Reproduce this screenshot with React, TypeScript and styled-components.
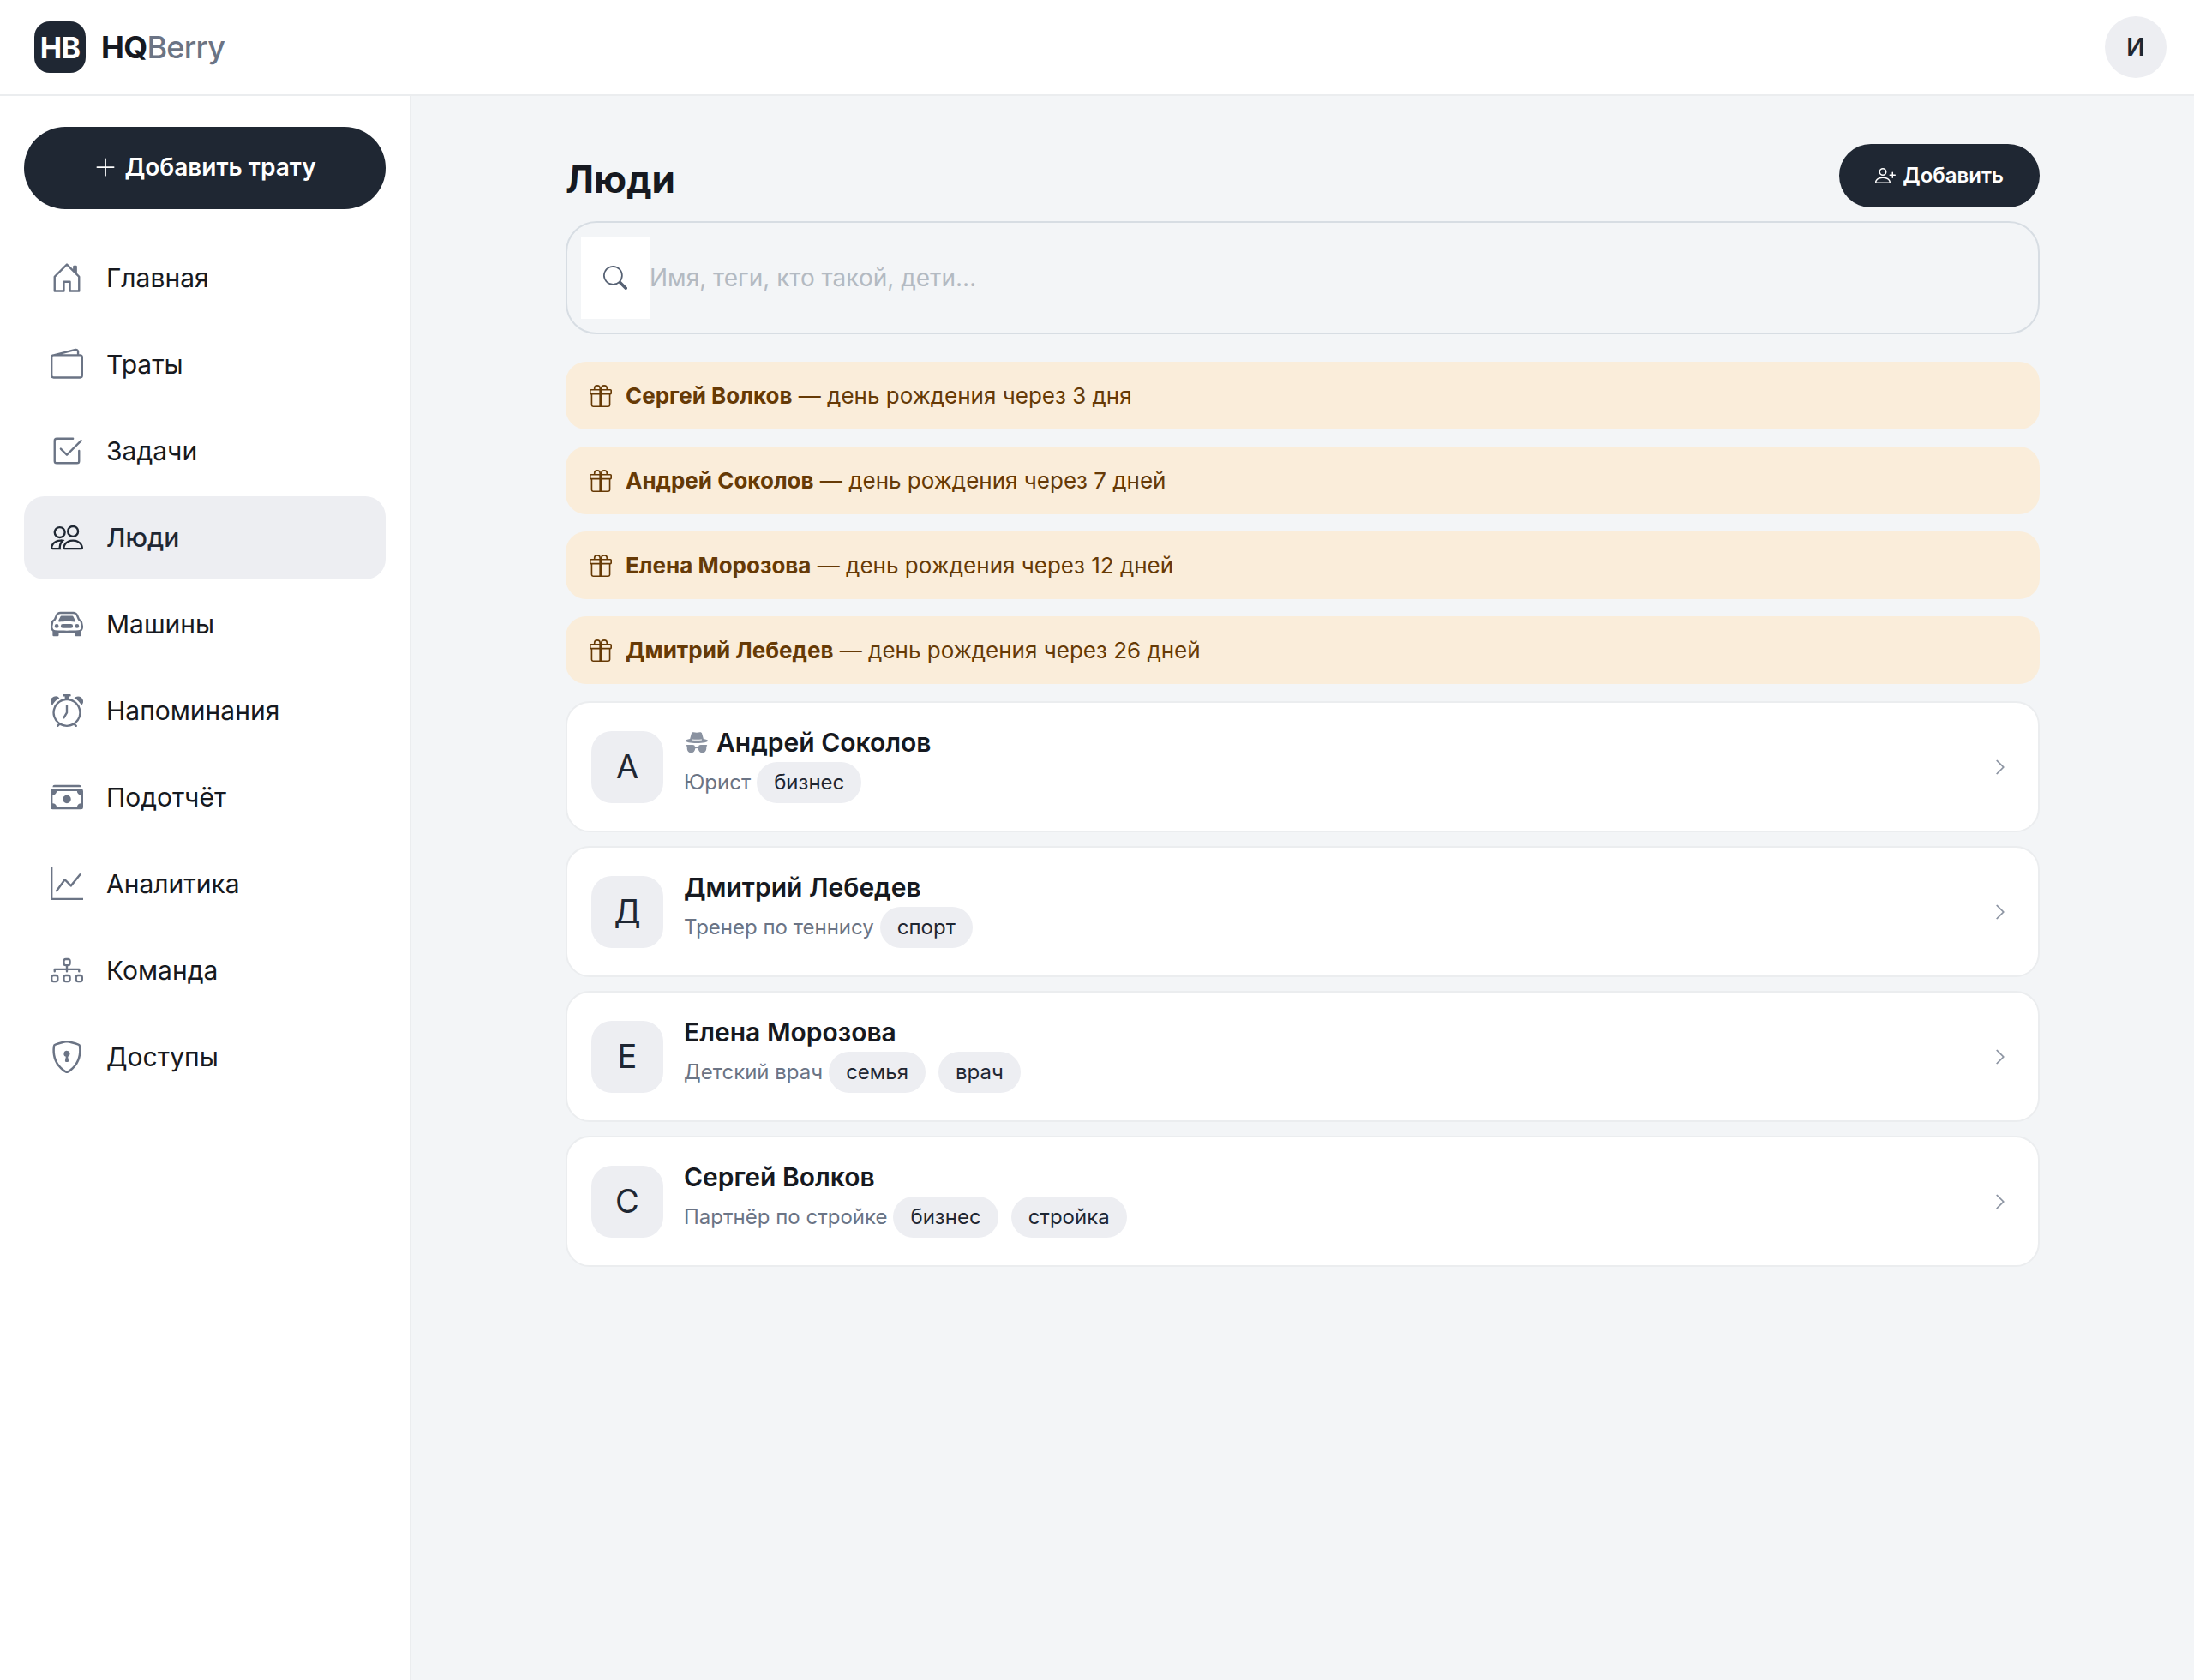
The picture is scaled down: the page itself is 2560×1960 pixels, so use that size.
import React from "react";
import styled, { createGlobalStyle } from "styled-components";
import type { IconType } from "react-icons";
import {
  BsPlusLg,
  BsHouseDoor,
  BsWallet2,
  BsCheck2Square,
  BsPeople,
  BsCarFront,
  BsAlarm,
  BsCashStack,
  BsGraphUp,
  BsDiagram3,
  BsShieldLock,
  BsPersonPlus,
  BsSearch,
  BsGift,
  BsChevronRight,
} from "react-icons/bs";

const color = {
  page: "#f3f5f7",
  surface: "#ffffff",
  soft: "#edeef2",
  line: "#ebedef",
  field: "#d7dde3",
  ink: "#161920",
  dark: "#1f2733",
  muted: "#6b7485",
  lens: "#566173",
  hint: "#b3bac2",
  faint: "#8a92a0",
  warm: "#faedda",
  warmInk: "#663a06",
};

const GlobalStyle = createGlobalStyle`
  *, *::before, *::after { box-sizing: border-box; }
  body {
    margin: 0;
    background: ${color.page};
    color: ${color.ink};
    font-family: Inter, "Noto Sans", sans-serif;
    font-size: 28px;
    line-height: 1.5;
  }
  button, input { font: inherit; }
  svg { display: block; flex: none; }
`;

const Shell = styled.div`
  min-height: 100vh;
  display: flex;
  flex-direction: column;
`;

const TopBar = styled.header`
  display: flex;
  align-items: center;
  justify-content: space-between;
  height: 112px;
  padding: 0 32px 0 40px;
  background: ${color.surface};
  border-bottom: 2px solid ${color.line};
`;

const Brand = styled.a`
  display: flex;
  align-items: center;
  gap: 18px;
  color: ${color.ink};
  font-size: 36px;
  font-weight: 700;
  letter-spacing: -0.02em;
  text-decoration: none;
`;

const BrandMark = styled.span`
  display: grid;
  place-items: center;
  width: 60px;
  height: 60px;
  border-radius: 18px;
  background: ${color.dark};
  color: #fff;
  font-size: 34px;
`;

const BrandTail = styled.span`
  color: ${color.muted};
  font-weight: 500;
`;

const UserButton = styled.button`
  width: 72px;
  height: 72px;
  padding: 0;
  border: 0;
  border-radius: 50%;
  background: ${color.soft};
  color: ${color.dark};
  font-size: 28px;
  font-weight: 600;
`;

const Body = styled.div`
  flex: 1;
  display: flex;
`;

const Sidebar = styled.aside`
  flex: none;
  display: flex;
  flex-direction: column;
  gap: 32px;
  width: 480px;
  padding: 36px 28px;
  background: ${color.surface};
  border-right: 2px solid ${color.line};
`;

const PillButton = styled.button<{ $size: "small" | "large" }>`
  display: flex;
  align-items: center;
  justify-content: center;
  gap: 8px;
  height: ${(p) => (p.$size === "large" ? 96 : 74)}px;
  padding: ${(p) => (p.$size === "large" ? "0 42px 2px" : "0 42px")};
  border: 0;
  border-radius: 48px;
  background: ${color.dark};
  color: #fff;
  font-size: ${(p) => (p.$size === "large" ? 28 : 24)}px;
  font-weight: 600;
`;

const Nav = styled.nav`
  display: flex;
  flex-direction: column;
  gap: 4px;
`;

const NavLink = styled.a<{ $active: boolean }>`
  display: flex;
  align-items: center;
  gap: 24px;
  height: 97px;
  padding: 0 28px;
  border-radius: 24px;
  background: ${(p) => (p.$active ? color.soft : "transparent")};
  color: ${(p) => (p.$active ? color.dark : color.ink)};
  font-size: 30px;
  font-weight: ${(p) => (p.$active ? 500 : 400)};
  text-decoration: none;
`;

const NavIcon = styled.span<{ $active: boolean }>`
  display: grid;
  place-items: center;
  width: 44px;
  padding-bottom: 1px;
  color: ${(p) => (p.$active ? color.dark : color.muted)};
`;

const Main = styled.main`
  flex: 1;
  min-width: 0;
  padding: 56px 40px;
`;

const Content = styled.div`
  max-width: 1720px;
  margin: 0 auto;
`;

const PageHead = styled.div`
  display: flex;
  align-items: flex-start;
  justify-content: space-between;
  margin-bottom: 16px;
`;

const Title = styled.h1`
  margin: 0;
  padding-top: 14px;
  font-size: 44px;
  line-height: 54px;
  font-weight: 700;
`;

const SearchBox = styled.label`
  display: flex;
  align-items: stretch;
  height: 132px;
  margin-bottom: 32px;
  padding: 16px;
  border: 2px solid ${color.field};
  border-radius: 36px;
`;

const SearchIcon = styled.span`
  display: grid;
  place-items: center;
  width: 80px;
  background: ${color.surface};
  color: ${color.lens};
`;

const SearchInput = styled.input`
  flex: 1;
  min-width: 0;
  padding: 0;
  border: 0;
  outline: 0;
  background: transparent;
  color: ${color.ink};
  font-size: 28px;
  &::placeholder {
    color: ${color.hint};
    opacity: 1;
  }
`;

const NoticeList = styled.div`
  display: flex;
  flex-direction: column;
  gap: 20px;
  margin-bottom: 20px;
`;

const Notice = styled.div`
  display: flex;
  align-items: center;
  gap: 16px;
  padding: 20px 28px;
  border-radius: 24px;
  background: ${color.warm};
  color: ${color.warmInk};
  font-size: 26px;
  line-height: 39px;
`;

const PeopleList = styled.div`
  display: flex;
  flex-direction: column;
  gap: 16px;
`;

const PersonCard = styled.a`
  display: flex;
  align-items: center;
  gap: 24px;
  padding: 24px 28px;
  border: 2px solid ${color.line};
  border-radius: 28px;
  background: ${color.surface};
  color: inherit;
  text-decoration: none;
`;

const Initial = styled.span`
  flex: none;
  display: grid;
  place-items: center;
  width: 84px;
  height: 84px;
  border-radius: 24px;
  background: ${color.soft};
  color: ${color.dark};
  font-size: 38px;
`;

const PersonText = styled.div`
  flex: 1;
  min-width: 0;
  padding-bottom: 8px;
`;

const PersonName = styled.div`
  display: flex;
  align-items: center;
  gap: 8px;
  font-size: 30px;
  line-height: 45px;
  font-weight: 600;
  svg {
    color: ${color.faint};
  }
`;

const PersonMeta = styled.div`
  display: flex;
  align-items: center;
  gap: 7px;
  color: ${color.muted};
  font-size: 24px;
  line-height: 36px;
`;

const Tags = styled.div`
  display: flex;
  gap: 15px;
`;

const Tag = styled.span`
  padding: 6px 20px;
  border-radius: 24px;
  background: ${color.soft};
  color: ${color.dark};
`;

const Arrow = styled.span`
  display: grid;
  place-items: center;
  width: 32px;
  color: ${color.faint};
  svg {
    stroke: currentColor;
    stroke-width: 0.4;
  }
`;

/* Hat and dark glasses, marks a contact that only the owner can see. */
function HiddenIcon() {
  return (
    <svg width="30" height="30" viewBox="0 0 16 16" fill="currentColor" aria-hidden="true">
      <path
        fillRule="evenodd"
        d="m4.736 1.968-.892 3.269-.014.058C2.113 5.568 1 6.006 1 6.5 1 7.328 4.134 8 8 8s7-.672 7-1.5c0-.494-1.113-.932-2.83-1.205l-.014-.058-.892-3.27c-.146-.533-.698-.849-1.239-.734C9.411 1.363 8.62 1.5 8 1.5s-1.411-.136-2.025-.267c-.541-.115-1.093.2-1.239.735m.015 3.867a.25.25 0 0 1 .274-.224c.9.092 1.91.143 2.975.143a30 30 0 0 0 2.975-.143.25.25 0 0 1 .05.498c-.918.093-1.944.145-3.025.145s-2.107-.052-3.025-.145a.25.25 0 0 1-.224-.274"
      />
      <path d="M2 10.5q.001-.264.085-.5H2a.5.5 0 0 1 0-1h3.5a1.5 1.5 0 0 1 1.488 1.312 3.5 3.5 0 0 1 2.024 0A1.5 1.5 0 0 1 10.5 9H14a.5.5 0 0 1 0 1h-.085q.084.236.085.5v1a2.5 2.5 0 0 1-5 0v-.14l-.21-.07a2.5 2.5 0 0 0-1.58 0l-.21.07v.14a2.5 2.5 0 0 1-5 0z" />
    </svg>
  );
}

const navItems: { label: string; icon: IconType; active?: boolean }[] = [
  { label: "Главная", icon: BsHouseDoor },
  { label: "Траты", icon: BsWallet2 },
  { label: "Задачи", icon: BsCheck2Square },
  { label: "Люди", icon: BsPeople, active: true },
  { label: "Машины", icon: BsCarFront },
  { label: "Напоминания", icon: BsAlarm },
  { label: "Подотчёт", icon: BsCashStack },
  { label: "Аналитика", icon: BsGraphUp },
  { label: "Команда", icon: BsDiagram3 },
  { label: "Доступы", icon: BsShieldLock },
];

const birthdays = [
  { name: "Сергей Волков", when: "3 дня" },
  { name: "Андрей Соколов", when: "7 дней" },
  { name: "Елена Морозова", when: "12 дней" },
  { name: "Дмитрий Лебедев", when: "26 дней" },
];

const people = [
  { name: "Андрей Соколов", role: "Юрист", tags: ["бизнес"], hidden: true },
  { name: "Дмитрий Лебедев", role: "Тренер по теннису", tags: ["спорт"] },
  { name: "Елена Морозова", role: "Детский врач", tags: ["семья", "врач"] },
  { name: "Сергей Волков", role: "Партнёр по стройке", tags: ["бизнес", "стройка"] },
];

export default function App() {
  return (
    <Shell>
      <GlobalStyle />
      <TopBar>
        <Brand href="#">
          <BrandMark>HB</BrandMark>
          <span>
            HQ<BrandTail>Berry</BrandTail>
          </span>
        </Brand>
        <UserButton type="button">И</UserButton>
      </TopBar>
      <Body>
        <Sidebar>
          <PillButton type="button" $size="large">
            <BsPlusLg size={28} />
            Добавить трату
          </PillButton>
          <Nav>
            {navItems.map(({ label, icon: Icon, active = false }) => (
              <NavLink key={label} href="#" $active={active}>
                <NavIcon $active={active}>
                  <Icon size={38} />
                </NavIcon>
                {label}
              </NavLink>
            ))}
          </Nav>
        </Sidebar>
        <Main>
          <Content>
            <PageHead>
              <Title>Люди</Title>
              <PillButton type="button" $size="small">
                <BsPersonPlus size={24} />
                Добавить
              </PillButton>
            </PageHead>
            <SearchBox>
              <SearchIcon>
                <BsSearch size={28} />
              </SearchIcon>
              <SearchInput type="search" placeholder="Имя, теги, кто такой, дети…" />
            </SearchBox>
            <NoticeList>
              {birthdays.map((b) => (
                <Notice key={b.name}>
                  <BsGift size={26} />
                  <span>
                    <strong>{b.name}</strong> — день рождения через {b.when}
                  </span>
                </Notice>
              ))}
            </NoticeList>
            <PeopleList>
              {people.map((p) => (
                <PersonCard key={p.name} href="#">
                  <Initial>{p.name[0]}</Initial>
                  <PersonText>
                    <PersonName>
                      {p.hidden && <HiddenIcon />}
                      {p.name}
                    </PersonName>
                    <PersonMeta>
                      <span>{p.role}</span>
                      <Tags>
                        {p.tags.map((t) => (
                          <Tag key={t}>{t}</Tag>
                        ))}
                      </Tags>
                    </PersonMeta>
                  </PersonText>
                  <Arrow>
                    <BsChevronRight size={20} />
                  </Arrow>
                </PersonCard>
              ))}
            </PeopleList>
          </Content>
        </Main>
      </Body>
    </Shell>
  );
}
